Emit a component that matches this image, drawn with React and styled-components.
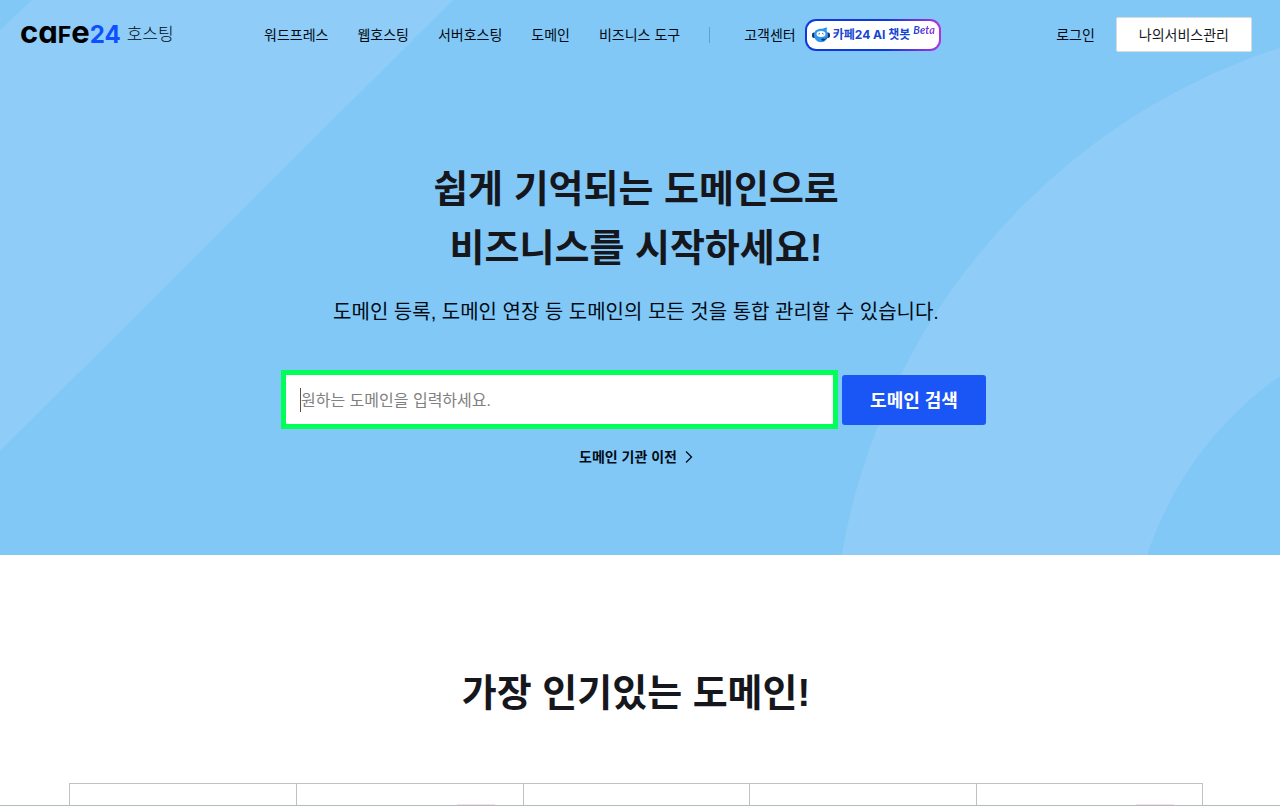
import React from "react";
import styled, { createGlobalStyle, css, ThemeProvider } from "styled-components";

const theme = {
    colors: {
        ink: "#16171d",
        black: "#000b14",
        white: "#fff",
        sky: "#82c8f7",
        skyLight: "#8fcdf8",
        blue: "#1a56f6",
        logoBlue: "#0c50ff",
        highlight: "#00ff57",
        line: "#c1c1c4",
        placeholder: "#808080",
        pink: "#fbdcf0",
    },
    font: {
        base: '"Liberation Sans", "Noto Sans CJK KR", sans-serif',
        logo: 'Inter, "Noto Sans CJK KR", sans-serif',
    },
};

// styled components - start
const GlobalStyle = createGlobalStyle`
    *, *::before, *::after {
        box-sizing: border-box;
    }
    body {
        margin: 0;
        background-color: #fff;
    }
    a {
        color: inherit;
        text-decoration: none;
    }
    h1, h2, p, ul {
        margin: 0;
        padding: 0;
    }
`;

const Page = styled.div`
    display: flex;
    flex-direction: column;
    height: 100vh;
    overflow: hidden;
    border-bottom: 1px solid #b0bcc1;
    font-family: ${(props) => props.theme.font.base};
    color: ${(props) => props.theme.colors.ink};
`;

const Hero = styled.div`
    position: relative;
    flex: none;
    overflow: hidden;
    padding-bottom: 86px;
    background-color: ${(props) => props.theme.colors.sky};
`;

const Backdrop = styled.svg`
    position: absolute;
    top: 0;
    width: 1280px;
    height: 100%;
    ${(props) => (props.$side === "right" ? css`right: 0;` : css`left: 0;`)}
`;

const Header = styled.header`
    position: relative;
    display: flex;
    align-items: center;
    height: 69px;
    padding: 0 28px 0 20px;
    font-size: 14px;
    line-height: 20px;
    color: ${(props) => props.theme.colors.black};
    white-space: nowrap;
`;

const Brand = styled.a`
    display: flex;
    align-items: center;
    gap: 6px;
    width: 244px;
`;

const Wordmark = styled.span`
    padding-bottom: 2px;
    font-family: ${(props) => props.theme.font.logo};
    font-size: 31px;
    font-weight: 700;
    line-height: 32px;
    color: #000;
    font-feature-settings: "cv11";
`;

const SmallCap = styled.span`
    font-size: 23px;
`;

const Digits = styled.span`
    font-size: 24px;
    color: ${(props) => props.theme.colors.logoBlue};
`;

const BrandName = styled.span`
    font-size: 17px;
    font-weight: 300;
    line-height: 24px;
`;

const Navigation = styled.nav`
    display: flex;
    align-items: center;
    gap: 29px;
`;

const Divider = styled.span`
    width: 1px;
    height: 16px;
    background-color: #6a9fc5;
`;

const Support = styled.div`
    display: flex;
    align-items: center;
    gap: 9px;
    margin-left: 5px;
`;

const ChatbotLink = styled.a`
    display: flex;
    align-items: center;
    gap: 3px;
    width: 136px;
    height: 32px;
    padding: 0 0 0 5px;
    border: 2px solid transparent;
    border-radius: 11px;
    background: linear-gradient(#fff, #fff) padding-box,
        linear-gradient(90deg, #1238dc 0%, #1238dc 60%, #b032dc 100%) border-box;
    color: #1546d2;
    font-family: ${(props) => props.theme.font.logo};
    font-size: 12px;
    font-weight: 700;
`;

const Beta = styled.span`
    align-self: flex-start;
    padding-right: 2px;
    background: linear-gradient(90deg, #1b45d8, #a836dc);
    background-clip: text;
    color: transparent;
    font-family: Lato, sans-serif;
    font-size: 11px;
    font-style: italic;
    font-weight: 700;
    line-height: 18px;
`;

const Account = styled.div`
    display: flex;
    align-items: center;
    gap: 21px;
    margin-left: auto;
`;

const ServiceButton = styled.button`
    height: 35px;
    padding: 0 22px;
    border: 1px solid #d5dde3;
    border-radius: 2px;
    background-color: ${(props) => props.theme.colors.white};
    color: ${(props) => props.theme.colors.ink};
    font: inherit;
    cursor: pointer;
`;

const Intro = styled.main`
    position: relative;
    display: flex;
    flex-direction: column;
    align-items: center;
    padding: 91px 8px 0 0;
    text-align: center;
`;

const Title = styled.h1`
    font-size: 38px;
    font-weight: 700;
    line-height: 59px;
`;

const Lead = styled.p`
    margin-top: 20px;
    font-size: 20px;
    line-height: 28px;
    color: ${(props) => props.theme.colors.black};
`;

const SearchForm = styled.form`
    display: flex;
    gap: 9px;
    width: 700px;
    max-width: 90%;
    margin-top: 49px;
`;

const SearchField = styled.label`
    display: flex;
    flex: 1;
    align-items: center;
    height: 49px;
    padding: 0 14px;
    outline: 5px solid ${(props) => props.theme.colors.highlight};
    background-color: ${(props) => props.theme.colors.white};
`;

const Caret = styled.span`
    width: 1px;
    height: 24px;
    background-color: #555;
`;

const SearchInput = styled.input`
    flex: 1;
    min-width: 0;
    height: 26px;
    padding: 2px 0 0;
    border: none;
    outline: none;
    background: none;
    font-family: inherit;
    font-size: 16px;
    color: ${(props) => props.theme.colors.ink};
    &::placeholder {
        color: ${(props) => props.theme.colors.placeholder};
        opacity: 1;
    }
`;

const SearchButton = styled.button`
    width: 144px;
    height: 50px;
    padding: 0 0 2px;
    border: none;
    border-radius: 3px;
    background-color: ${(props) => props.theme.colors.blue};
    color: ${(props) => props.theme.colors.white};
    font-family: inherit;
    font-size: 18px;
    font-weight: 700;
    cursor: pointer;
`;

const TransferLink = styled.a`
    display: flex;
    align-items: center;
    gap: 8px;
    margin-top: 20px;
    font-size: 14px;
    font-weight: 700;
    line-height: 24px;
    color: ${(props) => props.theme.colors.black};
`;

const Popular = styled.section`
    display: flex;
    flex: 1;
    flex-direction: column;
    align-items: center;
    padding: 109px 8px 0 0;
`;

const SectionTitle = styled.h2`
    font-size: 38px;
    font-weight: 700;
    line-height: 59px;
`;

const DomainList = styled.ul`
    display: grid;
    flex: 1;
    grid-template-columns: repeat(5, 1fr);
    width: 1134px;
    max-width: 90%;
    margin-top: 60px;
    border: solid ${(props) => props.theme.colors.line};
    border-width: 1px 1px 0;
    list-style: none;
`;

const DomainItem = styled.li`
    padding: 20px 28px 0;
    & + & {
        border-left: 1px solid ${(props) => props.theme.colors.line};
    }
`;

const SaleBadge = styled.span`
    display: block;
    width: 38px;
    height: 20px;
    margin-left: auto;
    background-color: ${(props) => props.theme.colors.pink};
`;
// styled components - end

const menu = ["워드프레스", "웹호스팅", "서버호스팅", "도메인", "비즈니스 도구"];

const domains = [
    { id: 1, sale: false },
    { id: 2, sale: true },
    { id: 3, sale: false },
    { id: 4, sale: false },
    { id: 5, sale: true },
];

function BotIcon() {
    return (
        <svg width="18" height="16" viewBox="0 0 18 16" aria-hidden="true">
            <rect x="0" y="5.500" width="4" height="5.500" rx="2" fill="#12306b" />
            <rect x="14" y="5.500" width="4" height="5.500" rx="2" fill="#12306b" />
            <path d="M2 8C2 4 5 1.800 9 1.800C11 1.800 12 0.800 15.300 0.500C15 2 14.600 3 14.600 4C15.600 5 16 6.500 16 8C16 12 13 15.200 9 15.200S2 12 2 8Z" fill="#2e97f2" />
            <ellipse cx="9" cy="7" rx="4.500" ry="2.900" fill="#fff" />
            <path d="M6.500 7q.7-1.200 1.400 0M10.100 7q.7-1.200 1.400 0" fill="none" stroke="#12306b" strokeWidth="0.900" />
            <path d="M15 10.500Q14 12.500 11.500 12.800" fill="none" stroke="#12306b" strokeWidth="0.900" />
            <ellipse cx="11" cy="12.600" rx="1.700" ry="1.200" fill="#12306b" />
        </svg>
    );
}

function Arrow() {
    return (
        <svg width="8" height="12" viewBox="0 0 8 12" fill="none" stroke="currentColor" strokeWidth="1.300" aria-hidden="true">
            <path d="M1 0.500L6.500 6L1 11.500" />
        </svg>
    );
}

export default function App() {
    return (
        <ThemeProvider theme={theme}>
            <GlobalStyle />
            <Page>
                <Hero>
                    <Backdrop $side="left" aria-hidden="true">
                        <path d="M32 0H453L0 451V30Z" fill={theme.colors.skyLight} />
                    </Backdrop>
                    <Backdrop $side="right" aria-hidden="true">
                        <circle cx="1482" cy="665" r="501" fill="none" stroke={theme.colors.skyLight} strokeWidth="297" />
                    </Backdrop>
                    <Header>
                        <Brand href="#">
                            <Wordmark>
                                ca<SmallCap>F</SmallCap>e<Digits>24</Digits>
                            </Wordmark>
                            <BrandName>호스팅</BrandName>
                        </Brand>
                        <Navigation aria-label="주 메뉴">
                            {menu.map((name) => (
                                <a href="#" key={name}>
                                    {name}
                                </a>
                            ))}
                            <Divider />
                            <Support>
                                <a href="#">고객센터</a>
                                <ChatbotLink href="#">
                                    <BotIcon />
                                    <span>카페24 AI 챗봇</span>
                                    <Beta>Beta</Beta>
                                </ChatbotLink>
                            </Support>
                        </Navigation>
                        <Account>
                            <a href="#">로그인</a>
                            <ServiceButton type="button">나의서비스관리</ServiceButton>
                        </Account>
                    </Header>
                    <Intro>
                        <Title>
                            쉽게 기억되는 도메인으로
                            <br />
                            비즈니스를 시작하세요!
                        </Title>
                        <Lead>도메인 등록, 도메인 연장 등 도메인의 모든 것을 통합 관리할 수 있습니다.</Lead>
                        <SearchForm onSubmit={(e) => e.preventDefault()}>
                            <SearchField>
                                <Caret />
                                <SearchInput type="text" aria-label="도메인 검색어" placeholder="원하는 도메인을 입력하세요." />
                            </SearchField>
                            <SearchButton type="submit">도메인 검색</SearchButton>
                        </SearchForm>
                        <TransferLink href="#">
                            도메인 기관 이전
                            <Arrow />
                        </TransferLink>
                    </Intro>
                </Hero>
                <Popular>
                    <SectionTitle>가장 인기있는 도메인!</SectionTitle>
                    <DomainList>
                        {domains.map((domain) => (
                            <DomainItem key={domain.id}>{domain.sale && <SaleBadge />}</DomainItem>
                        ))}
                    </DomainList>
                </Popular>
            </Page>
        </ThemeProvider>
    );
}
